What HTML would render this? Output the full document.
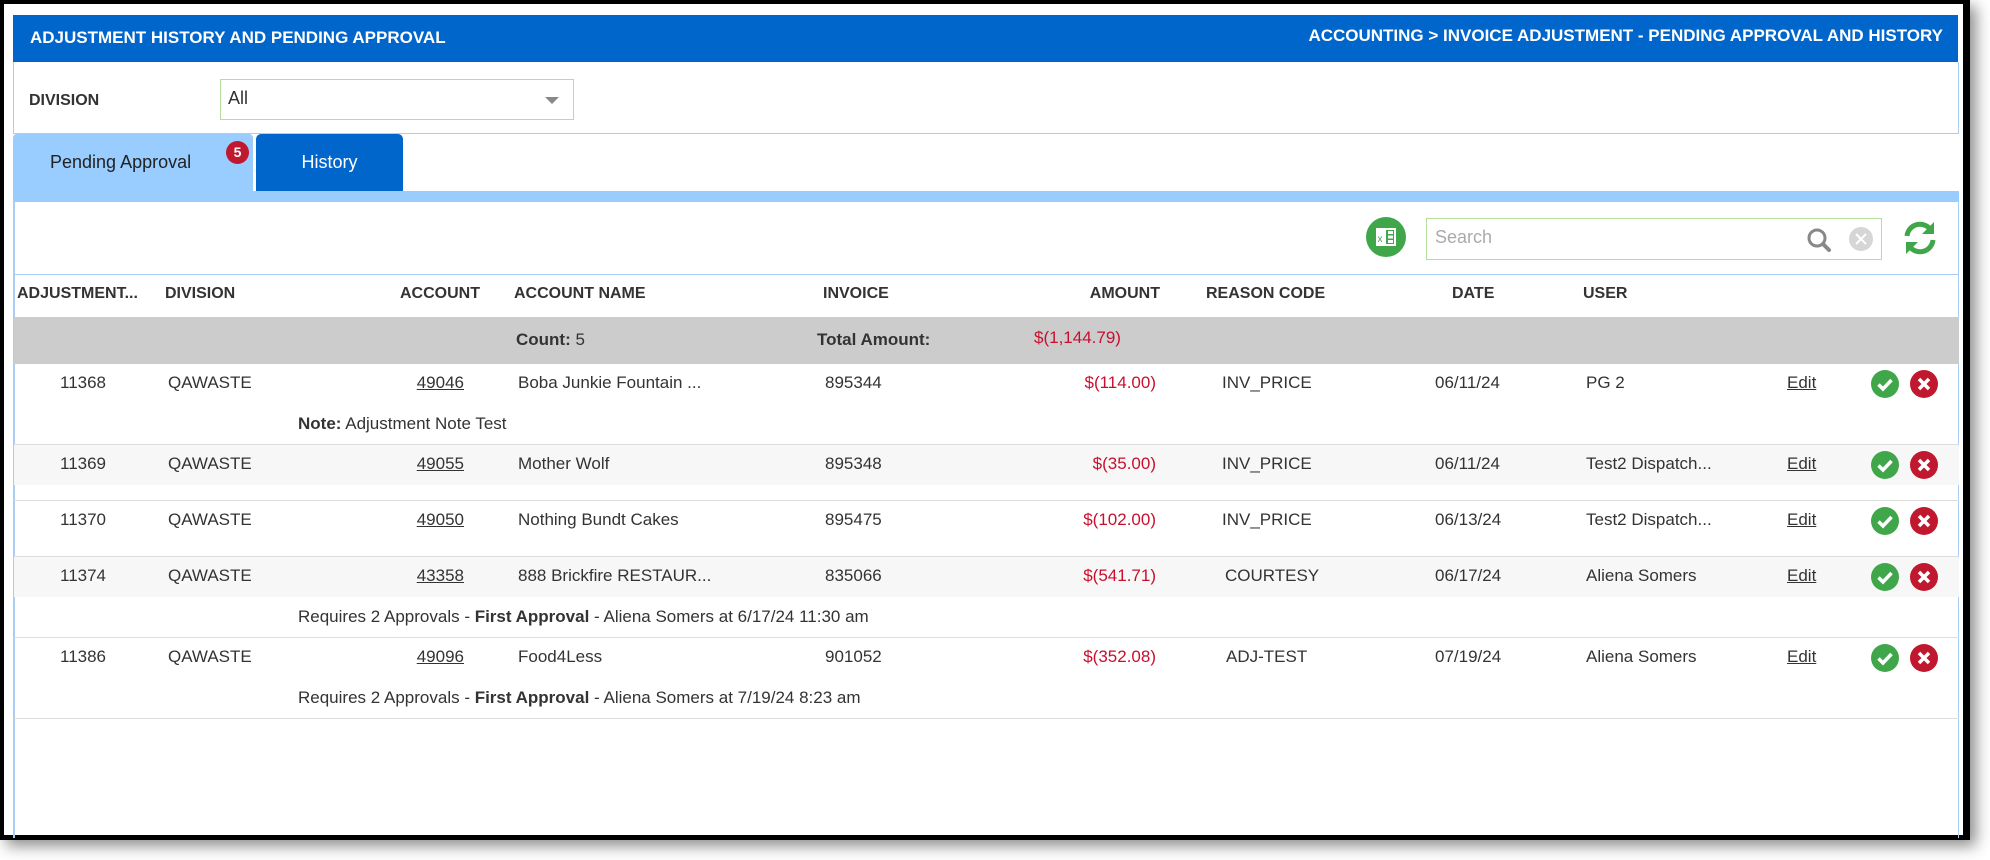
<!DOCTYPE html>
<html><head><meta charset="utf-8"><style>
*{margin:0;padding:0;box-sizing:border-box}
body{width:1990px;height:860px;background:#fff;position:relative;overflow:hidden;font-family:"Liberation Sans",Arial,sans-serif;color:#333}
.a{position:absolute;white-space:nowrap}
.frame{position:absolute;left:0;top:0;width:1970px;height:840px;border:4px solid #000;border-right-width:7px;border-bottom-width:5px;box-shadow:6px 6px 14px rgba(0,0,0,.45)}
.hd{font-weight:bold;font-size:16px;top:285px;color:#333}
.t{font-size:17px;color:#333}
.r{text-align:right}
.u{text-decoration:underline}
.red{color:#c8102e}
.line{position:absolute;left:14px;width:1945px;height:1px;background:#ddd}
.stripe{position:absolute;left:14px;width:1945px;background:#f7f7f7}
</style></head><body>
<div class="frame"></div>
<div class="a" style="left:13px;top:15px;width:1945px;height:47px;background:#0066cc"></div>
<div class="a" style="left:30px;top:28px;color:#fff;font-weight:bold;font-size:17px">ADJUSTMENT HISTORY AND PENDING APPROVAL</div>
<div class="a" style="right:47px;top:26px;color:#fff;font-weight:bold;font-size:17px">ACCOUNTING &gt; INVOICE ADJUSTMENT - PENDING APPROVAL AND HISTORY</div>
<div class="a" style="left:13px;top:62px;width:1946px;height:72px;border:1px solid #a9cdf5;border-top:none"></div>
<div class="a" style="left:29px;top:92px;font-weight:bold;font-size:16px;color:#333">DIVISION</div>
<div class="a" style="left:220px;top:79px;width:354px;height:41px;border:1px solid #b5dd9c"></div>
<div class="a" style="left:228px;top:88px;font-size:18px">All</div>
<div class="a" style="left:545px;top:97px;width:0;height:0;border-left:7px solid transparent;border-right:7px solid transparent;border-top:7px solid #888"></div>
<div class="a" style="left:13px;top:134px;width:240px;height:60px;background:#99ccff;border-radius:4px 4px 0 0"></div>
<div class="a" style="left:50px;top:152px;font-size:18px;color:#222">Pending Approval</div>
<div class="a" style="left:226px;top:141px;width:23px;height:23px;border-radius:50%;background:#c0182f;color:#fff;font-weight:bold;font-size:14px;text-align:center;line-height:23px">5</div>
<div class="a" style="left:256px;top:134px;width:147px;height:60px;background:#0066cc;border-radius:5px 5px 0 0"></div>
<div class="a" style="left:256px;top:152px;width:147px;text-align:center;font-size:18px;color:#fff">History</div>
<div class="a" style="left:13px;top:191px;width:1946px;height:11px;background:#99ccff"></div>
<div class="a" style="left:13px;top:202px;width:1946px;height:636px;border-left:2px solid #a9cdf5;border-right:1px solid #a9cdf5"></div>
<svg class="a" style="left:1366px;top:217px" width="40" height="40" viewBox="0 0 40 40"><circle cx="20" cy="20" r="20" fill="#3fa649"/><rect x="10" y="11" width="20" height="18" fill="#fff"/><rect x="20" y="13" width="8" height="14" fill="#3fa649"/><path d="M22 14h5v3h-5zM22 18.5h5v3h-5zM22 23h5v3h-5z" fill="#fff"/><text x="11.5" y="25" font-size="10" fill="#3fa649" font-family="Liberation Sans">x</text></svg>
<div class="a" style="left:1426px;top:218px;width:456px;height:42px;border:1px solid #b5dd9c"></div>
<div class="a" style="left:1435px;top:227px;font-size:18px;color:#aaa">Search</div>
<svg class="a" style="left:1806px;top:227px" width="26" height="26" viewBox="0 0 26 26"><circle cx="11" cy="11" r="8" fill="none" stroke="#888" stroke-width="3"/><path d="M17 17l6 6" stroke="#888" stroke-width="4" stroke-linecap="round"/></svg>
<svg class="a" style="left:1848px;top:226px" width="26" height="26" viewBox="0 0 26 26"><circle cx="13" cy="13" r="12" fill="#d6d6d6"/><path d="M8 8l10 10M18 8l-10 10" stroke="#fff" stroke-width="2"/></svg>
<svg class="a" style="left:1900px;top:218px" width="40" height="40" viewBox="0 0 40 40"><path d="M7 18a13 13 0 0 1 23-7" fill="none" stroke="#3fa649" stroke-width="5"/><path d="M34 4v12h-12z" fill="#3fa649"/><path d="M33 22a13 13 0 0 1-23 7" fill="none" stroke="#3fa649" stroke-width="5"/><path d="M6 36v-12h12z" fill="#3fa649"/></svg>
<div class="a" style="left:14px;top:274px;width:1945px;height:1px;background:#a9cdf5"></div>
<div class="a hd" style="left:17px">ADJUSTMENT...</div>
<div class="a hd" style="left:165px">DIVISION</div>
<div class="a hd r" style="right:1510px">ACCOUNT</div>
<div class="a hd" style="left:514px">ACCOUNT NAME</div>
<div class="a hd" style="left:823px">INVOICE</div>
<div class="a hd r" style="right:830px">AMOUNT</div>
<div class="a hd" style="left:1206px">REASON CODE</div>
<div class="a hd" style="left:1452px">DATE</div>
<div class="a hd" style="left:1583px">USER</div>
<div class="a" style="left:14px;top:317px;width:1945px;height:47px;background:#cccccc"></div>
<div class="a t" style="left:516px;top:330px"><b>Count:</b> 5</div>
<div class="a t" style="left:817px;top:330px;font-weight:bold">Total Amount:</div>
<div class="a t red" style="left:1034px;top:328px">$(1,144.79)</div>
<div class="stripe" style="top:445px;height:40px"></div>
<div class="stripe" style="top:557px;height:40px"></div>
<div class="line" style="top:444px"></div>
<div class="line" style="top:500px"></div>
<div class="line" style="top:556px"></div>
<div class="line" style="top:637px"></div>
<div class="line" style="top:718px"></div>

<div class="a t" style="left:60px;top:373px">11368</div>
<div class="a t" style="left:168px;top:373px">QAWASTE</div>
<div class="a t u r" style="right:1526px;top:373px">49046</div>
<div class="a t" style="left:518px;top:373px">Boba Junkie Fountain ...</div>
<div class="a t" style="left:825px;top:373px">895344</div>
<div class="a t red r" style="right:834px;top:373px">$(114.00)</div>
<div class="a t" style="left:1222px;top:373px">INV_PRICE</div>
<div class="a t" style="left:1435px;top:373px">06/11/24</div>
<div class="a t" style="left:1586px;top:373px">PG 2</div>
<div class="a t u" style="left:1787px;top:373px">Edit</div>
<div class="a t" style="left:298px;top:414px"><b>Note:</b> Adjustment Note Test</div>

<div class="a t" style="left:60px;top:454px">11369</div>
<div class="a t" style="left:168px;top:454px">QAWASTE</div>
<div class="a t u r" style="right:1526px;top:454px">49055</div>
<div class="a t" style="left:518px;top:454px">Mother Wolf</div>
<div class="a t" style="left:825px;top:454px">895348</div>
<div class="a t red r" style="right:834px;top:454px">$(35.00)</div>
<div class="a t" style="left:1222px;top:454px">INV_PRICE</div>
<div class="a t" style="left:1435px;top:454px">06/11/24</div>
<div class="a t" style="left:1586px;top:454px">Test2 Dispatch...</div>
<div class="a t u" style="left:1787px;top:454px">Edit</div>

<div class="a t" style="left:60px;top:510px">11370</div>
<div class="a t" style="left:168px;top:510px">QAWASTE</div>
<div class="a t u r" style="right:1526px;top:510px">49050</div>
<div class="a t" style="left:518px;top:510px">Nothing Bundt Cakes</div>
<div class="a t" style="left:825px;top:510px">895475</div>
<div class="a t red r" style="right:834px;top:510px">$(102.00)</div>
<div class="a t" style="left:1222px;top:510px">INV_PRICE</div>
<div class="a t" style="left:1435px;top:510px">06/13/24</div>
<div class="a t" style="left:1586px;top:510px">Test2 Dispatch...</div>
<div class="a t u" style="left:1787px;top:510px">Edit</div>

<div class="a t" style="left:60px;top:566px">11374</div>
<div class="a t" style="left:168px;top:566px">QAWASTE</div>
<div class="a t u r" style="right:1526px;top:566px">43358</div>
<div class="a t" style="left:518px;top:566px">888 Brickfire RESTAUR...</div>
<div class="a t" style="left:825px;top:566px">835066</div>
<div class="a t red r" style="right:834px;top:566px">$(541.71)</div>
<div class="a t" style="left:1225px;top:566px">COURTESY</div>
<div class="a t" style="left:1435px;top:566px">06/17/24</div>
<div class="a t" style="left:1586px;top:566px">Aliena Somers</div>
<div class="a t u" style="left:1787px;top:566px">Edit</div>
<div class="a t" style="left:298px;top:607px">Requires 2 Approvals - <b>First Approval</b> - Aliena Somers at 6/17/24 11:30 am</div>

<div class="a t" style="left:60px;top:647px">11386</div>
<div class="a t" style="left:168px;top:647px">QAWASTE</div>
<div class="a t u r" style="right:1526px;top:647px">49096</div>
<div class="a t" style="left:518px;top:647px">Food4Less</div>
<div class="a t" style="left:825px;top:647px">901052</div>
<div class="a t red r" style="right:834px;top:647px">$(352.08)</div>
<div class="a t" style="left:1226px;top:647px">ADJ-TEST</div>
<div class="a t" style="left:1435px;top:647px">07/19/24</div>
<div class="a t" style="left:1586px;top:647px">Aliena Somers</div>
<div class="a t u" style="left:1787px;top:647px">Edit</div>
<div class="a t" style="left:298px;top:688px">Requires 2 Approvals - <b>First Approval</b> - Aliena Somers at 7/19/24 8:23 am</div>

<svg width="0" height="0" style="position:absolute"><defs>
<symbol id="ck" viewBox="0 0 28 28"><circle cx="14" cy="14" r="14" fill="#3fa649"/><path d="M7.5 14.5l4.5 4.5 8.5-9" fill="none" stroke="#fff" stroke-width="3.5"/></symbol>
<symbol id="xx" viewBox="0 0 28 28"><circle cx="14" cy="14" r="14" fill="#c0182f"/><path d="M9 9l10 10M19 9l-10 10" stroke="#fff" stroke-width="3.5"/></symbol>
</defs></svg>
<svg class="a" style="left:1871px;top:370px" width="28" height="28"><use href="#ck"/></svg>
<svg class="a" style="left:1910px;top:370px" width="28" height="28"><use href="#xx"/></svg>
<svg class="a" style="left:1871px;top:451px" width="28" height="28"><use href="#ck"/></svg>
<svg class="a" style="left:1910px;top:451px" width="28" height="28"><use href="#xx"/></svg>
<svg class="a" style="left:1871px;top:507px" width="28" height="28"><use href="#ck"/></svg>
<svg class="a" style="left:1910px;top:507px" width="28" height="28"><use href="#xx"/></svg>
<svg class="a" style="left:1871px;top:563px" width="28" height="28"><use href="#ck"/></svg>
<svg class="a" style="left:1910px;top:563px" width="28" height="28"><use href="#xx"/></svg>
<svg class="a" style="left:1871px;top:644px" width="28" height="28"><use href="#ck"/></svg>
<svg class="a" style="left:1910px;top:644px" width="28" height="28"><use href="#xx"/></svg>
</body></html>
